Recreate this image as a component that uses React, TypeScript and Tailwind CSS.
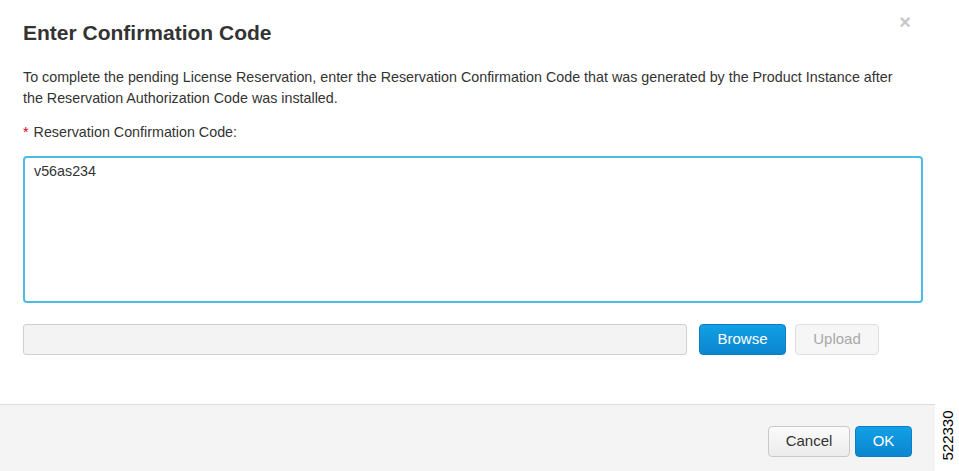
import { useState } from 'react';

export default function App() {
  const [code, setCode] = useState('v56as234');

  return (
    <div className="flex h-[471px] w-[959px] bg-white font-['Liberation_Sans',Arial,sans-serif] text-[#333]">
      <div className="flex w-[935px] flex-col">
        <div className="flex-1 px-[23px]">
          <div className="flex items-start justify-between pt-[20px]">
            <h1 className="text-[21px] font-bold leading-[26px]">Enter Confirmation Code</h1>
            <button className="mr-[1px] mt-[-8px] text-[20px] font-bold leading-none text-[#c8c8c8]">×</button>
          </div>
          <p className="mt-[21px] text-[14.3px] leading-[21px]">
            To complete the pending License Reservation, enter the Reservation Confirmation Code that was generated by the Product Instance after
            <br />
            the Reservation Authorization Code was installed.
          </p>
          <label className="mt-[13px] flex items-center text-[14.3px] leading-[21px]">
            <span className="mr-[5px] text-[#d0021b]">*</span>
            Reservation Confirmation Code:
          </label>
          <textarea
            value={code}
            onChange={(e) => setCode(e.target.value)}
            className="mt-[13px] block h-[147px] w-[900px] resize-none rounded-[4px] border-2 border-[#4cbce4] px-[9px] py-[3px] text-[14.3px] leading-[20px] text-[#333] outline-none"
          />
          <div className="mt-[21px] flex items-center">
            <div className="h-[31px] w-[664px] rounded-[3px] border border-[#cfcfcf] bg-[#f3f3f3]" />
            <button className="ml-[12px] h-[31px] w-[87px] rounded-[4px] border border-[#0a7fc4] bg-gradient-to-b from-[#12a0e6] to-[#0b86cf] text-[15px] text-white">
              Browse
            </button>
            <button className="ml-[9px] h-[31px] w-[84px] rounded-[4px] border border-[#dedede] bg-[#f6f6f6] text-[15px] text-[#a9a9a9]">
              Upload
            </button>
          </div>
        </div>
        <div className="flex h-[67px] items-center justify-end border-t border-[#dcdcdc] bg-[#f4f4f4] pr-[23px] pt-[6px]">
          <button className="h-[31px] w-[82px] rounded-[4px] border border-[#c9c9c9] bg-gradient-to-b from-[#fafafa] to-[#ececec] text-[15px] text-[#333]">
            Cancel
          </button>
          <button className="ml-[5px] h-[31px] w-[57px] rounded-[4px] border border-[#0a7fc4] bg-gradient-to-b from-[#12a0e6] to-[#0b86cf] text-[15px] text-white">
            OK
          </button>
        </div>
      </div>
      <div className="flex w-[24px] items-end justify-center pb-[6px]">
        <span className="block -rotate-90 whitespace-nowrap text-[15px] leading-none text-black [transform-origin:center] translate-y-[-22px]">
          522330
        </span>
      </div>
    </div>
  );
}
